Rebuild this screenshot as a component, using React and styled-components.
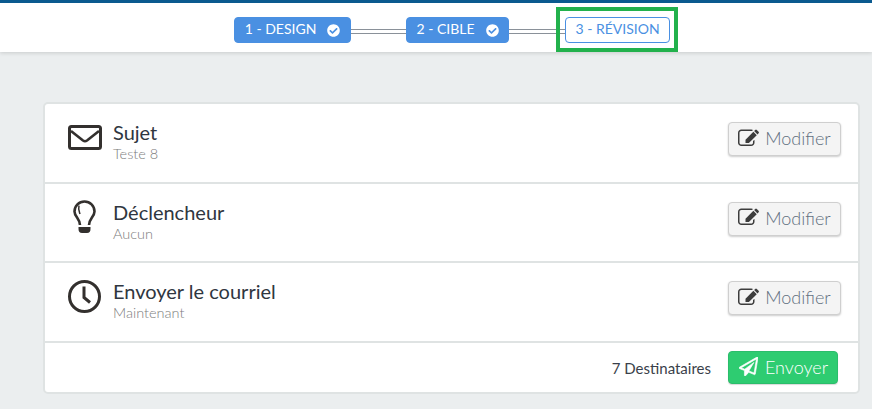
import React from 'react'
import styled, { createGlobalStyle } from 'styled-components'
import { FaCheckCircle } from 'react-icons/fa'

const Global = createGlobalStyle`
    html, body {
        margin: 0;
        height: 100%;
        overflow: hidden;
        background: #ebeeef;
        font-family: Lato, "Open Sans", sans-serif;
    }
`

const Header = styled.header`
    position: relative;
    box-sizing: border-box;
    height: 52px;
    border-top: 3px solid #0b5a8f;
    background: #fff;
    box-shadow: 0 1px 4px rgba(0, 0, 0, 0.15);
    display: flex;
    justify-content: center;
    align-items: flex-start;
    padding: 14px 0 0 32px;
`

const Step = styled.div`
    height: 26px;
    width: ${p => p.$w}px;
    box-sizing: border-box;
    border-radius: 4px;
    border: 1px solid #4a90e2;
    background: ${p => (p.$done ? '#4a90e2' : '#fff')};
    color: ${p => (p.$done ? '#fff' : '#4a90e2')};
    font-size: 14px;
    line-height: 22px;
    display: flex;
    align-items: center;
    justify-content: center;
    gap: 11px;
    padding-bottom: 2px;

    svg {
        font-size: 13px;
        margin-top: 2px;
    }
`

const Link = styled.div`
    width: ${p => p.$w}px;
    height: 3px;
    margin-top: 12px;
    border-top: 1px solid #8a9199;
    border-bottom: 1px solid #8a9199;
`

const Highlight = styled.div`
    position: absolute;
    left: 556px;
    top: 4px;
    width: 122px;
    height: 45px;
    box-sizing: border-box;
    border: 4px solid #22b14c;
`

const Main = styled.main`
    padding: 50px 12px 0 43px;
`

const Card = styled.section`
    background: #fff;
    border: 2px solid #dfe3e3;
    border-radius: 5px;
    box-sizing: border-box;
    height: 292px;
`

const Row = styled.div`
    height: 79.5px;
    box-sizing: border-box;
    border-bottom: 2px solid #dfe3e3;
    display: flex;
    align-items: flex-start;
    justify-content: space-between;
    padding: 18px 17px 0 22px;
`

const Left = styled.div`
    display: flex;
    align-items: flex-start;
    margin-top: -2px;
`

const IconBox = styled.div`
    width: 35px;
    height: 34px;
    margin-right: 11px;
    display: flex;
    align-items: center;
    justify-content: center;
    color: #33302e;
`

const Title = styled.div`
    font-size: 20px;
    line-height: 24px;
    color: #2f3640;
`

const Sub = styled.div`
    font-size: 14.5px;
    line-height: 16px;
    margin-top: 2px;
    font-weight: 300;
    color: #7d7d7d;
`

const EditButton = styled.button`
    width: 113px;
    height: 34px;
    border: 1px solid #cfcfcf;
    border-radius: 4px;
    background: #f4f4f4;
    box-shadow: 0 1px 2px rgba(0, 0, 0, 0.2);
    color: #62707f;
    font-family: inherit;
    font-size: 18px;
    font-weight: 300;
    display: flex;
    align-items: center;
    justify-content: center;
    gap: 6px;
    padding: 0 0 2px;
`

const Footer = styled.div`
    display: flex;
    align-items: center;
    justify-content: flex-end;
    padding: 8.5px 20px 0 0;
    gap: 17px;
`

const Count = styled.span`
    font-size: 15px;
    color: #3a3f4a;
`

const SendButton = styled.button`
    width: 110px;
    height: 33px;
    border: 1px solid #2bbd6b;
    border-radius: 4px;
    background: #2ecc71;
    box-shadow: 0 1px 1px rgba(0, 0, 0, 0.15);
    color: #fff;
    font-family: inherit;
    font-size: 18px;
    font-weight: 300;
    display: flex;
    align-items: center;
    justify-content: center;
    gap: 7px;
    padding: 0 0 2px 1px;
`

const EnvelopeIcon = () => (
    <svg width="34" height="25" viewBox="0 0 34 25" fill="none" stroke="currentColor">
        <rect x="1.5" y="1.5" width="31" height="22" rx="2" strokeWidth="3" />
        <path d="M3 6l12 9.5q2 1.5 4 0L31 6" strokeWidth="2.6" />
    </svg>
)

const BulbIcon = () => (
    <svg width="23" height="33" viewBox="0 0 23 33" fill="none" stroke="currentColor">
        <path d="M7 25C7 19 1.5 16.5 1.5 11.5a10 10 0 0 1 20 0C21.5 16.5 16 19 16 25" strokeWidth="2.6" />
        <path d="M6 5.5C5 9 6 11 7 14" strokeWidth="1.5" />
        <path d="M5.5 27h12v2q0 4-3.5 4h-5q-3.5 0-3.5-4z" fill="currentColor" stroke="none" />
    </svg>
)

const ClockIcon = () => (
    <svg width="33" height="33" viewBox="0 0 33 33" fill="none" stroke="currentColor">
        <circle cx="16.5" cy="16.5" r="15" strokeWidth="3" />
        <path d="M16 6.5v11l6 5" strokeWidth="3" />
    </svg>
)

const EditIcon = () => (
    <svg width="21" height="21" viewBox="0 0 1792 1792" fill="#3c3c3c">
        <path d="M1408 1058v190q0 119-84.500 203.500t-203.500 84.500h-832q-119 0-203.500-84.500t-84.500-203.500v-832q0-119 84.500-203.500t203.500-84.500h832q63 0 117 25 15 7 18 23 3 17-9 29l-49 49q-14 14-32 8-23-6-45-6h-832q-66 0-113 47t-47 113v832q0 66 47 113t113 47h832q66 0 113-47t47-113v-126q0-13 9-22l64-64q15-15 35-7t20 29zm-96-738l288 288-672 672h-288v-288zm444 132l-92 92-288-288 92-92q28-28 68-28t68 28l152 152q28 28 28 68t-28 68z" />
    </svg>
)

const PlaneIcon = () => (
    <svg width="19" height="19" viewBox="0 0 1792 1792" fill="#fff" stroke="#fff" strokeWidth="60">
        <path d="M1764 11q33 24 27 64l-256 1536q-5 29-32 45-14 8-31 8-11 0-24-5l-527-215-298 327q-18 21-47 21-14 0-23-4-19-7-30-23.500t-11-36.500v-452l-472-193q-37-14-40-55-3-39 32-59l1664-960q35-21 68 2zm-342 1499l221-1323-1434 827 336 137 863-639-478 797z" />
    </svg>
)

const rows = [
    { Icon: EnvelopeIcon, title: 'Sujet', sub: 'Teste 8' },
    { Icon: BulbIcon, title: 'Déclencheur', sub: 'Aucun' },
    { Icon: ClockIcon, title: 'Envoyer le courriel', sub: 'Maintenant' },
]

export default function App() {
    return (
        <>
            <Global />
            <Header>
                <Step $done $w={117}>1 - DESIGN <FaCheckCircle /></Step>
                <Link $w={55} />
                <Step $done $w={103}>2 - CIBLE <FaCheckCircle /></Step>
                <Link $w={56} />
                <Step $w={105}>3 - RÉVISION</Step>
                <Highlight />
            </Header>
            <Main>
                <Card>
                    {rows.map(({ Icon, title, sub }) => (
                        <Row key={title}>
                            <Left>
                                <IconBox><Icon /></IconBox>
                                <div>
                                    <Title>{title}</Title>
                                    <Sub>{sub}</Sub>
                                </div>
                            </Left>
                            <EditButton><EditIcon /> Modifier</EditButton>
                        </Row>
                    ))}
                    <Footer>
                        <Count>7 Destinataires</Count>
                        <SendButton><PlaneIcon /> Envoyer</SendButton>
                    </Footer>
                </Card>
            </Main>
        </>
    )
}
